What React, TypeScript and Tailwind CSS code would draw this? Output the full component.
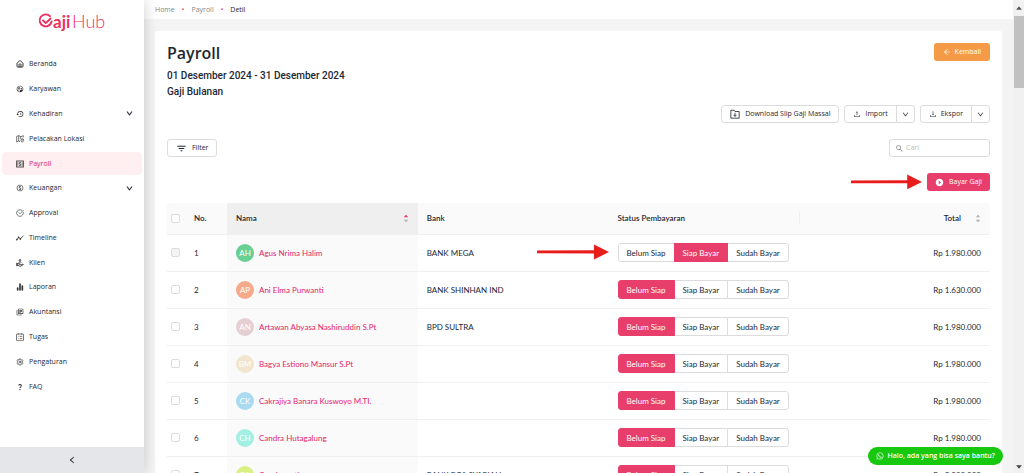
import React, { ReactNode } from "react";
import {
  AiFillCaretDown,
  AiFillCaretUp,
  AiOutlineArrowLeft,
  AiOutlineDown,
  AiOutlineDownload,
  AiOutlineLeft,
  AiOutlineUpload,
} from "react-icons/ai";
import {
  MdFilterList,
  MdHistory,
  MdOutlineLibraryBooks,
  MdOutlineMonetizationOn,
  MdOutlineSupervisedUserCircle,
  MdPlayCircleFilled,
  MdQuestionMark,
  MdSearch,
} from "react-icons/md";
import { FaWhatsapp } from "react-icons/fa";
import { ChartNoAxesColumn, CircleCheckBig, House, Settings } from "lucide-react";

type MenuItem = {
  label: string;
  icon: ReactNode;
  active?: boolean;
  expandable?: boolean;
};

const PayrollIcon = () => (
  <svg viewBox="0 0 24 24" className="size-2" fill="none" stroke="currentColor" strokeWidth="2.6">
    <rect x="2" y="3" width="20" height="18" />
    <path d="M15 8h-5v4h4v4H9M12 6v2M12 16v2M5.500 7v10M18.500 7v10" strokeWidth="2" />
  </svg>
);

const MapIcon = () => (
  <svg viewBox="0 0 24 24" className="size-2" fill="none" stroke="currentColor" strokeWidth="2">
    <path d="M12 20l-4-2-6 3V4l6-2 7 3 7-3v5M8 2v16M14 5v7" />
    <path d="M19 22c-3-3-4-5-4-7a4 4 0 0 1 8 0c0 2-1 4-4 7z" />
    <circle cx="19" cy="15" r="0.800" />
  </svg>
);

const TimelineIcon = () => (
  <svg viewBox="0 0 24 24" className="size-2" fill="none" stroke="currentColor" strokeWidth="2.4">
    <path d="M2 17l6-7 5 5 9-10" />
    <circle cx="2.500" cy="17" r="1.500" fill="currentColor" />
    <circle cx="8" cy="10" r="1.500" fill="currentColor" />
    <circle cx="13" cy="15" r="1.500" fill="currentColor" />
  </svg>
);

const ClientIcon = () => (
  <svg viewBox="0 0 24 24" className="size-2" fill="none" stroke="currentColor" strokeWidth="2.6">
    <circle cx="12" cy="4" r="2.500" />
    <path d="M8 11c0-3 8-3 8 0M1 13v7h4v-7zM5 14h5l4 2h-4M5 19l8 3 9-5c0-2-2-2-3-1l-5 2" />
  </svg>
);

const TaskIcon = () => (
  <svg viewBox="0 0 24 24" className="size-2" fill="none" stroke="currentColor" strokeWidth="2">
    <rect x="1.500" y="3" width="21" height="20" rx="2" />
    <path d="M7 1v4M17 1v4M6 10h2M11 10h8M6 17h2M11 17h8" />
  </svg>
);

const FolderIcon = () => (
  <svg viewBox="0 0 24 24" className="size-[10px]" fill="none" stroke="currentColor" strokeWidth="2">
    <path d="M2 3h8l2 3h10v16H2zM12 9v8M8.500 14l3.500 4 3.500-4" />
  </svg>
);

const menu: MenuItem[] = [
  { label: "Beranda", icon: <House className="size-2" strokeWidth={3} /> },
  { label: "Karyawan", icon: <MdOutlineSupervisedUserCircle className="size-2" /> },
  { label: "Kehadiran", icon: <MdHistory className="size-2" />, expandable: true },
  { label: "Pelacakan Lokasi", icon: <MapIcon /> },
  { label: "Payroll", icon: <PayrollIcon />, active: true },
  { label: "Keuangan", icon: <MdOutlineMonetizationOn className="size-2" />, expandable: true },
  { label: "Approval", icon: <CircleCheckBig className="size-2" /> },
  { label: "Timeline", icon: <TimelineIcon /> },
  { label: "Klien", icon: <ClientIcon /> },
  { label: "Laporan", icon: <ChartNoAxesColumn className="size-2" strokeWidth={5} /> },
  { label: "Akuntansi", icon: <MdOutlineLibraryBooks className="size-2" /> },
  { label: "Tugas", icon: <TaskIcon /> },
  { label: "Pengaturan", icon: <Settings className="size-2" /> },
  { label: "FAQ", icon: <MdQuestionMark className="size-2" /> },
];

const statuses = ["Belum Siap", "Siap Bayar", "Sudah Bayar"];

const employees = [
  { name: "Agus Nrima Halim", initials: "AH", color: "bg-[#68cf95]", bank: "BANK MEGA", status: 1, total: "Rp 1.980.000" },
  { name: "Ani Elma Purwanti", initials: "AP", color: "bg-[#f7a98b]", bank: "BANK SHINHAN IND", status: 0, total: "Rp 1.630.000" },
  { name: "Artawan Abyasa Nashiruddin S.Pt", initials: "AN", color: "bg-[#e6cfd2]", bank: "BPD SULTRA", status: 0, total: "Rp 1.980.000" },
  { name: "Bagya Estiono Mansur S.Pt", initials: "BM", color: "bg-[#f2e5cd]", bank: "", status: 0, total: "Rp 1.980.000" },
  { name: "Cakrajiya Banara Kuswoyo M.TI.", initials: "CK", color: "bg-[#a9daef]", bank: "", status: 0, total: "Rp 1.980.000" },
  { name: "Candra Hutagalung", initials: "CH", color: "bg-[#a3f0e2]", bank: "", status: 0, total: "Rp 1.980.000" },
  { name: "Carubawati", initials: "CA", color: "bg-[#d9f083]", bank: "BANK BCA SYARIAH", status: 0, total: "Rp 2.080.000" },
];

const Logo = () => (
  <svg viewBox="0 0 68 24" className="h-6 w-[68px] overflow-visible" role="img" aria-label="GajiHub">
    <g fill="none" stroke="#ec2f63" strokeWidth="1.900" strokeLinecap="round" strokeLinejoin="round">
      <path d="M12 4.200A6 6 0 1 0 13.600 9.500" />
      <path d="M5 8.500l2.800 2.600 4.700-4.600" />
    </g>
    <text x="15" y="16" fontSize="17" fontWeight="700" fill="#ec2f63" fontFamily="Lato, sans-serif">
      aji
    </text>
    <text x="34" y="16" fontSize="18" fontWeight="300" fill="#ec2f63" fontFamily="Lato, sans-serif">
      Hub
    </text>
  </svg>
);

const Arrow = ({ className }: { className: string }) => (
  <svg viewBox="0 0 72 16" className={className} aria-hidden="true">
    <path d="M0 6.500l57-.2V.500l15 7.500-15 7.500V9.500L0 9.300z" fill="#e91c1c" />
  </svg>
);

const Sorter = ({ active }: { active?: boolean }) => (
  <span className="flex flex-col text-[#b5b5b5]">
    <AiFillCaretUp className={active ? "-mb-px size-[6px] text-[#e83e6b]" : "-mb-px size-[6px]"} />
    <AiFillCaretDown className="size-[6px]" />
  </span>
);

const outline = "flex h-[18px] items-center border border-[#dcdcdc] bg-white whitespace-nowrap";

const SplitButton = ({ label, icon }: { label: string; icon: ReactNode }) => (
  <div className="flex">
    <button className={`${outline} gap-1 rounded-l-[3px] px-2`}>
      {icon}
      {label}
    </button>
    <button className={`${outline} -ml-px rounded-r-[3px] px-[5px]`} aria-label={`Opsi ${label}`}>
      <AiOutlineDown className="size-[7px] stroke-[20]" />
    </button>
  </div>
);

const Sidebar = () => (
  <aside className="z-10 flex w-36 shrink-0 flex-col bg-white text-[7px] shadow-[0_0_14px_rgba(0,0,0,0.2)]">
    <div className="flex h-[53px] shrink-0 justify-center pt-3">
      <Logo />
    </div>
    <nav className="grid h-[345px] auto-rows-fr gap-[2px] px-[2px]">
      {menu.map(({ label, icon, active, expandable }) => (
        <a
          key={label}
          href="#"
          className={`flex items-center rounded-[4px] pr-[9px] pl-[14px] ${active ? "bg-[#ffeff0]" : ""}`}
        >
          <span className="mr-[5px] text-[#333]">{icon}</span>
          <span className={`flex-1 ${active ? "text-[#e6236b]" : ""}`}>{label}</span>
          {expandable && <AiOutlineDown className="size-[7px] stroke-[80]" />}
        </a>
      ))}
    </nav>
    <button className="mt-auto flex h-[26px] shrink-0 items-center justify-center bg-[#e5e6ea]" aria-label="Tutup menu">
      <AiOutlineLeft className="size-2 stroke-[40]" />
    </button>
  </aside>
);

const StatusGroup = ({ status, name }: { status: number; name: string }) => (
  <div className="flex" role="group" aria-label={`Status ${name}`}>
    {statuses.map((label, i) => (
      <button
        key={label}
        className={`-ml-px h-[19px] border px-2 whitespace-nowrap first:ml-0 first:rounded-l-[3px] last:rounded-r-[3px] ${
          i === status ? "z-1 border-[#e83e6b] bg-[#e83e6b] text-white" : "border-[#dcdcdc] bg-white"
        }`}
      >
        {label}
      </button>
    ))}
  </div>
);

const checkbox = "block size-[9px] appearance-none rounded-[2px] border border-[#dcdcdc] bg-white disabled:bg-[#f4f4f4]";

const EmployeeTable = () => (
  <table className="w-full table-fixed text-left font-[Lato,sans-serif] text-[8px]">
    <colgroup>
      <col className="w-[18px]" />
      <col className="w-[42px]" />
      <col />
      <col />
      <col />
      <col />
    </colgroup>
    <thead>
      <tr className="h-[31px] border-b border-[#f0f0f0] bg-[#fafafa] *:font-semibold">
        <th className="rounded-tl-[4px] pl-1">
          <input type="checkbox" className={checkbox} aria-label="Pilih semua" />
        </th>
        <th className="pl-[9px]">No.</th>
        <th className="bg-[#efefef] px-[9px]">
          <div className="flex items-center justify-between">
            Nama
            <Sorter active />
          </div>
        </th>
        <th className="px-[9px]">Bank</th>
        <th className="px-[9px]">Status Pembayaran</th>
        <th className="rounded-tr-[4px] pr-[9px]">
          <div className="flex h-3 items-center justify-end gap-[14px] border-l border-[#f0f0f0]">
            Total
            <Sorter />
          </div>
        </th>
      </tr>
    </thead>
    <tbody>
      {employees.map(({ name, initials, color, bank, status, total }, i) => (
        <tr key={name} className="h-[37px] border-b border-[#f0f0f0]">
          <td className="pl-1">
            <input type="checkbox" className={checkbox} disabled={i === 0} aria-label={`Pilih ${name}`} />
          </td>
          <td className="pl-[9px]">{i + 1}</td>
          <td className="bg-[#fafafa] px-[9px]">
            <div className="flex items-center gap-[5px]">
              <span className={`flex size-[18px] shrink-0 items-center justify-center rounded-full text-white ${color}`}>
                {initials}
              </span>
              <a href="#" className="whitespace-nowrap text-[#e6236b]">
                {name}
              </a>
            </div>
          </td>
          <td className="px-[9px]">{bank}</td>
          <td className="relative px-[9px]">
            {i === 0 && <Arrow className="absolute top-[9px] right-full w-[72px]" />}
            <StatusGroup status={status} name={name} />
          </td>
          <td className="px-[9px] text-right">{total}</td>
        </tr>
      ))}
    </tbody>
  </table>
);

const App: React.FC = () => (
  <div className="flex h-screen overflow-hidden bg-[#f4f4f4] font-['Open_Sans','Noto_Sans',sans-serif] text-[7px] leading-3 text-[#222733]">
    <Sidebar />
    <div className="flex min-w-0 flex-1 flex-col">
      <nav className="flex h-[19px] items-center gap-[7px] bg-white px-[11px] text-[#858983]" aria-label="Breadcrumb">
        <a href="#">Home</a>
        <span className="text-[#e83e6b]">•</span>
        <a href="#">Payroll</a>
        <span className="text-[#e83e6b]">•</span>
        <span className="text-[#222733]">Detil</span>
      </nav>
      <main className="mx-[11px] mt-3 min-h-0 flex-1 overflow-hidden rounded-t-[2px] bg-white px-3 pt-3">
        <div className="flex items-start justify-between">
          <div>
            <h1 className="text-[16px] leading-5 font-semibold">Payroll</h1>
            <div className="mt-[5px] font-[Roboto,sans-serif] text-[10px] leading-4 font-medium">
              <p>01 Desember 2024 - 31 Desember 2024</p>
              <p>Gaji Bulanan</p>
            </div>
          </div>
          <button className="flex h-[18px] items-center gap-1 rounded-[3px] bg-[#f59b47] px-[9px] text-white">
            <AiOutlineArrowLeft className="size-2" />
            Kembali
          </button>
        </div>
        <div className="mt-[5px] flex justify-end gap-[5px]">
          <button className={`${outline} gap-[5px] rounded-[3px] px-2`}>
            <FolderIcon />
            Download Slip Gaji Massal
          </button>
          <SplitButton label="Import" icon={<AiOutlineUpload className="size-2" />} />
          <SplitButton label="Ekspor" icon={<AiOutlineDownload className="size-2" />} />
        </div>
        <div className="mt-4 flex justify-between">
          <button className={`${outline} gap-[5px] rounded-[3px] px-2`}>
            <MdFilterList className="size-[11px]" />
            Filter
          </button>
          <label className={`${outline} w-[101px] gap-[2px] rounded-[3px] px-[5px]`}>
            <MdSearch className="size-[9px] text-[#888]" />
            <input type="text" aria-label="Cari" placeholder="Cari" className="min-w-0 flex-1 outline-none placeholder:text-[#b9bfc4]" />
          </label>
        </div>
        <div className="mt-4 mb-3 flex items-center justify-end gap-[5px]">
          <Arrow className="w-[71px]" />
          <button className="flex h-[18px] items-center gap-[5px] rounded-[3px] bg-[#e83e6b] px-2 text-white">
            <MdPlayCircleFilled className="size-[9px]" />
            Bayar Gaji
          </button>
        </div>
        <EmployeeTable />
      </main>
    </div>
    <div className="flex w-[11px] shrink-0 flex-col items-center bg-[#f1f1f1]" aria-hidden="true">
      <AiFillCaretUp className="my-1 size-2 text-[#555]" />
      <div className="h-[72px] w-[10px] bg-[#c1c1c1]" />
      <AiFillCaretDown className="mt-auto mb-[2px] size-2 text-[#444]" />
    </div>
    <button className="fixed right-[21px] bottom-2 z-20 flex h-[18px] items-center gap-1 rounded-full bg-[#17c80f] px-2 font-semibold text-white">
      <FaWhatsapp className="size-2" />
      Halo, ada yang bisa saya bantu?
    </button>
  </div>
);

export default App;
